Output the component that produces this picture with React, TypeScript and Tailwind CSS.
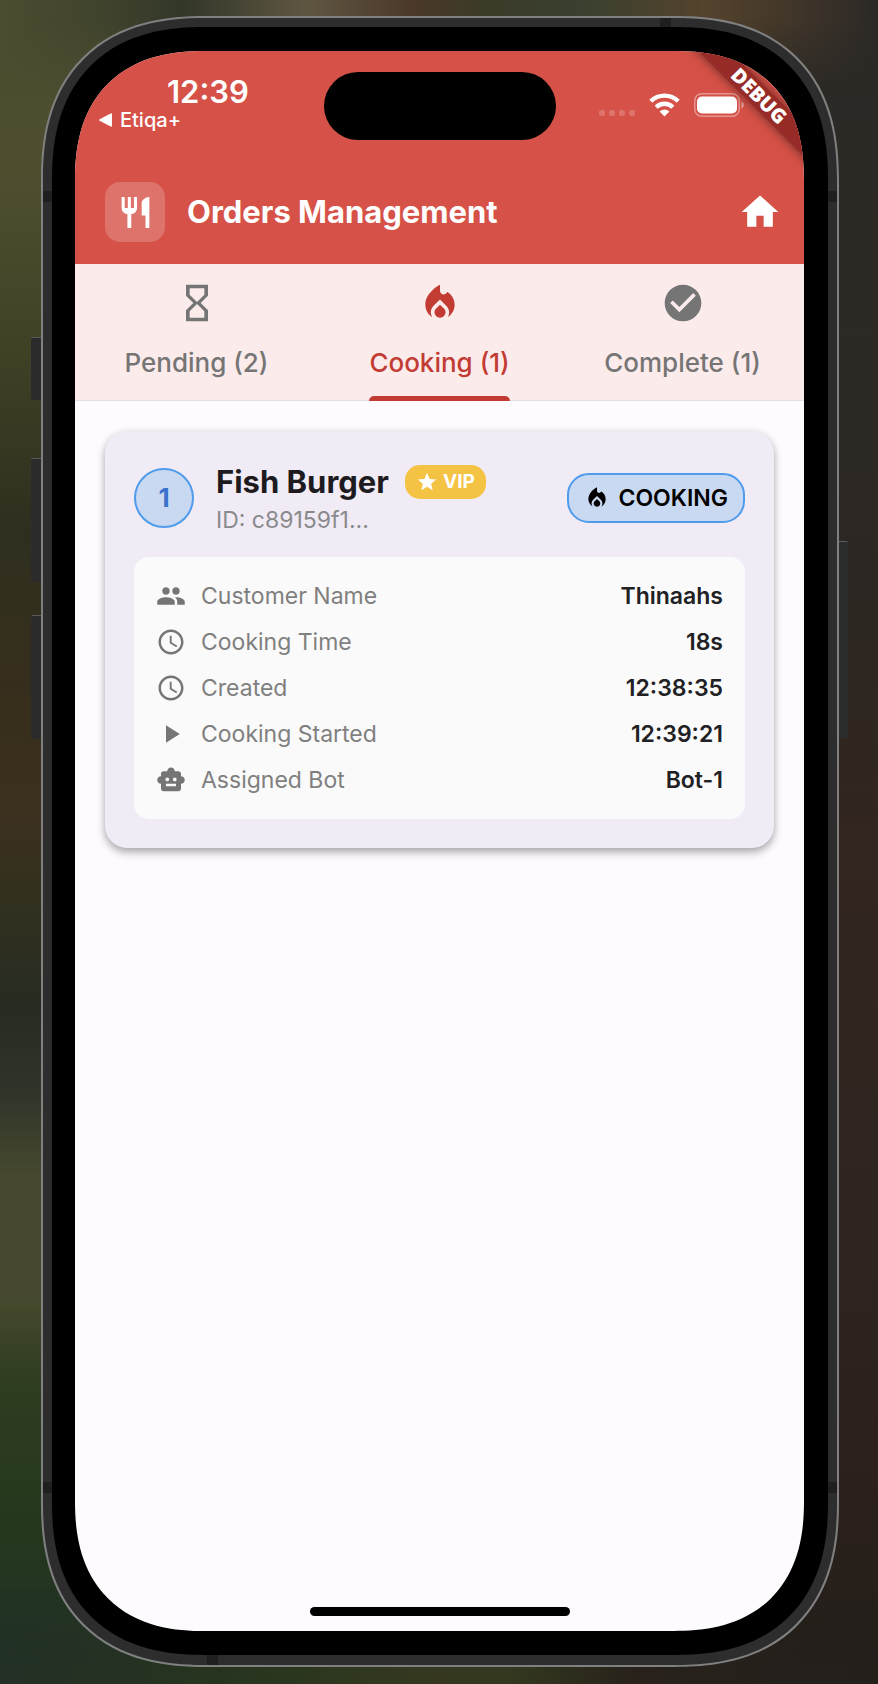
import type { IconType } from "react-icons";
import {
  MdAccessTime,
  MdCheckCircle,
  MdHome,
  MdHourglassEmpty,
  MdLocalFireDepartment,
  MdPeople,
  MdPlayArrow,
  MdRestaurant,
  MdSmartToy,
  MdStar,
} from "react-icons/md";

type Tab = { label: string; icon: IconType; active?: boolean };
type Detail = { label: string; value: string; icon: IconType };

const tabs: Tab[] = [
  { label: "Pending (2)", icon: MdHourglassEmpty },
  { label: "Cooking (1)", icon: MdLocalFireDepartment, active: true },
  { label: "Complete (1)", icon: MdCheckCircle },
];

const details: Detail[] = [
  { label: "Customer Name", value: "Thinaahs", icon: MdPeople },
  { label: "Cooking Time", value: "18s", icon: MdAccessTime },
  { label: "Created", value: "12:38:35", icon: MdAccessTime },
  { label: "Cooking Started", value: "12:39:21", icon: MdPlayArrow },
  { label: "Assigned Bot", value: "Bot-1", icon: MdSmartToy },
];

function Wifi() {
  return (
    <svg viewBox="0 0 31 24" className="h-6 w-[31px]" fill="none" aria-hidden="true">
      <path d="M1.8 8.2a19.6 19.6 0 0 1 27.4 0" stroke="white" strokeWidth="4.4" />
      <path d="M7.2 14.2a11.8 11.8 0 0 1 16.6 0" stroke="white" strokeWidth="4.4" />
      <path d="M15.5 23.4l-4.9-4.9a7 7 0 0 1 9.8 0z" fill="white" />
    </svg>
  );
}

function Battery() {
  return (
    <svg viewBox="0 0 50 24" className="h-6 w-[50px]" fill="none" aria-hidden="true">
      <rect x="0.75" y="0.75" width="44.5" height="22.5" rx="7" stroke="white" strokeOpacity="0.4" strokeWidth="1.5" />
      <rect x="3" y="3.5" width="40" height="17" rx="5" fill="white" />
      <path d="M47.500 8.500c3 1.200 3 5.800 0 7z" fill="white" fillOpacity="0.45" />
    </svg>
  );
}

function StatusBar() {
  return (
    <div className="flex items-start justify-between">
      <div className="flex flex-col pl-6 pt-[25px] text-white">
        <span className="pl-[68px] text-[31px] leading-8 font-semibold">12:39</span>
        <a href="#etiqa" className="flex items-center gap-2 text-xl leading-6 font-medium">
          <svg viewBox="0 0 13 14" className="h-[14px] w-[13px]" fill="white" aria-hidden="true">
            <path d="M.6 6.200 11.600.5Q13 0 13 1.400v11.200q0 1.400-1.400.9L.6 7.800Q-.4 7 .6 6.200z" />
          </svg>
          Etiqa+
        </a>
      </div>
      <div className="flex items-center gap-[14px] pt-[42px] pr-[60px]">
        <div className="flex gap-1 pt-4">
          <span className="size-[6px] rounded-xs bg-white/20" />
          <span className="size-[6px] rounded-xs bg-white/20" />
          <span className="size-[6px] rounded-xs bg-white/20" />
          <span className="size-[6px] rounded-xs bg-white/20" />
        </div>
        <Wifi />
        <Battery />
      </div>
    </div>
  );
}

function OrderCard() {
  return (
    <article className="rounded-[22px] bg-[#f0ebf5] p-[29px] shadow-[0_5px_8px_rgba(0,0,0,0.26),0_1px_7px_rgba(0,0,0,0.12)]">
      <div className="flex items-center gap-[22px]">
        <span className="flex size-[60px] items-center justify-center rounded-full border-2 border-[#4f9bec] bg-[#cad9f2] text-[26px] leading-8 font-bold text-[#3a72cc]">
          1
        </span>
        <div className="flex-1">
          <div className="flex items-center gap-4">
            <h2 className="text-[31px] leading-[44px] font-bold text-[#1d1b20]">Fish Burger</h2>
            <span className="flex items-center gap-[5px] rounded-[15px] bg-[#f5c344] px-[11px] py-1 text-[19px] leading-[26px] font-bold text-white">
              <MdStar className="size-[22px]" />
              VIP
            </span>
          </div>
          <p className="text-[23px] leading-8 text-[#8a8a8d]">ID: c89159f1...</p>
        </div>
        <span className="flex items-center gap-2 rounded-[22px] border-2 border-[#4f9bec] bg-[#cad9f2] px-[15px] py-[9px] text-[23px] leading-7 font-semibold text-black">
          <MdLocalFireDepartment className="size-[26px]" />
          COOKING
        </span>
      </div>
      <dl className="mt-[21px] rounded-[15px] bg-[#fafafa] px-[22px] py-4">
        {details.map(({ label, value, icon: Icon }) => (
          <div key={label} className="flex h-[46px] items-center">
            <dt className="flex items-center gap-[15px] text-[23px] text-[#7f7f7f]">
              <Icon className="size-[30px] text-[#757575]" />
              {label}
            </dt>
            <dd className="ml-auto text-[23px] font-semibold text-[#212124]">{value}</dd>
          </div>
        ))}
      </dl>
    </article>
  );
}

function Screen() {
  return (
    <div className="relative flex flex-1 flex-col overflow-hidden rounded-[130px] bg-[#fdfbfe] [corner-shape:superellipse(1.25)]">
      <header className="bg-[#d65147]">
        <StatusBar />
        <div className="flex items-center gap-[22px] pt-[50px] pr-[22px] pb-[22px] pl-[30px] text-white">
          <span className="flex size-[60px] items-center justify-center rounded-[15px] bg-white/20">
            <MdRestaurant className="size-[37px]" />
          </span>
          <h1 className="flex-1 text-[31px] leading-10 font-bold">Orders Management</h1>
          <button type="button" aria-label="Home">
            <MdHome className="size-11" />
          </button>
        </div>
      </header>

      <nav className="grid grid-cols-3 border-b border-[#e3dde9] bg-[#fcebeb]">
        {tabs.map(({ label, icon: Icon, active }) => (
          <button
            key={label}
            type="button"
            aria-pressed={!!active}
            className={`-mb-px flex justify-center pt-[17px] ${active ? "text-[#c23c34]" : "text-[#757575]"}`}
          >
            <span className="flex flex-col items-center">
              <Icon className="size-11" />
              <span className="pt-5 pb-[15px] text-[26px] leading-9 font-medium">{label}</span>
              <span className={`h-[5px] w-full rounded-t-[5px] ${active ? "bg-[#c23c34]" : ""}`} />
            </span>
          </button>
        ))}
      </nav>

      <main className="flex-1 px-[30px] py-[30px]">
        <OrderCard />
      </main>

      <div className="mx-auto mb-[15px] h-[9px] w-[260px] rounded-full bg-black" />

      <div className="absolute top-[21px] left-1/2 h-[68px] w-[232px] -translate-x-1/2 rounded-full bg-black" />
      <div className="absolute top-[34px] -right-[55px] flex h-[22px] w-[200px] rotate-45 items-center justify-center bg-[#972b27] font-['Open_Sans',sans-serif] text-xl font-extrabold text-white shadow-[0_0_11px_rgba(0,0,0,0.5)]">
        DEBUG
      </div>
    </div>
  );
}

export default function App() {
  return (
    <div className="relative flex min-h-screen bg-[linear-gradient(180deg,#4b4c30,#4f4f30_10%,#3f3f25_22%,#2f2f1f_31%,#372e1c_42%,#3c301f_48%,#33301e_53%,#262c22_60%,#2f3529_65%,#47492f_70%,#46492d_77%,#2f3d20_82%,#25381d_90%,#223026),linear-gradient(180deg,#2b2926,#2d2a25_20%,#2c2722_35%,#32261f_50%,#2e2520_75%,#2b201b_88%,#231f1b)] bg-size-[50%_100%,50%_100%] bg-position-[left,right] bg-no-repeat pt-4 pr-[39px] pb-[17px] pl-[41px] font-['Inter',sans-serif]">
      <div className="absolute inset-x-0 top-0 h-24 bg-[linear-gradient(90deg,#4b4c30,#42452d_10%,#333729_21%,#5f5642_35%,#4b3828_47%,#3b3a28_55%,#39402f_66%,#54432d_80%,#483a2a_87%,#2b2926)] mask-[linear-gradient(#000_20%,transparent)]" />
      <div className="absolute inset-x-0 bottom-0 h-24 bg-[linear-gradient(90deg,#223026,#26341f_25%,#30381f_42%,#35381f_50%,#33381f_58%,#28221b_72%,#231f1b)] mask-[linear-gradient(transparent,#000_80%)]" />
      <div className="relative flex flex-1">
        <span className="absolute top-[321px] -left-[10px] h-[63px] w-[10px] rounded-l-xs border-t border-[#5a5a5a] bg-[#2b2b2b]" />
        <span className="absolute top-[442px] -left-[10px] h-[124px] w-[10px] rounded-l-xs border-t border-[#5a5a5a] bg-[#2b2b2b]" />
        <span className="absolute top-[599px] -left-[10px] h-[124px] w-[10px] rounded-l-xs border-t border-[#5a5a5a] bg-[#2b2b2b]" />
        <span className="absolute top-[525px] -right-[9px] h-[197px] w-[9px] rounded-r-xs border-t border-[#5a5a5a] bg-[#2b2c2c]" />
        <div className="relative flex flex-1 rounded-[164px] border-2 border-[#808080] bg-[#2d2d2d] p-[9px] pb-[10px] [corner-shape:superellipse(1.25)]">
          <span className="absolute top-[173px] left-0 h-[11px] w-[9px] bg-[#1f1f1f]" />
          <span className="absolute top-[173px] right-0 h-[11px] w-[9px] bg-[#1f1f1f]" />
          <span className="absolute bottom-[172px] left-0 h-[11px] w-[9px] bg-[#1f1f1f]" />
          <span className="absolute right-0 bottom-[172px] h-[11px] w-[9px] bg-[#1f1f1f]" />
          <span className="absolute top-0 right-[166px] h-[9px] w-[11px] bg-[#1f1f1f]" />
          <span className="absolute bottom-0 left-[164px] h-[10px] w-[11px] bg-[#1f1f1f]" />
          <div className="flex flex-1 rounded-[153px] bg-black p-6 pl-[23px] [corner-shape:superellipse(1.25)]">
            <Screen />
          </div>
        </div>
      </div>
    </div>
  );
}
